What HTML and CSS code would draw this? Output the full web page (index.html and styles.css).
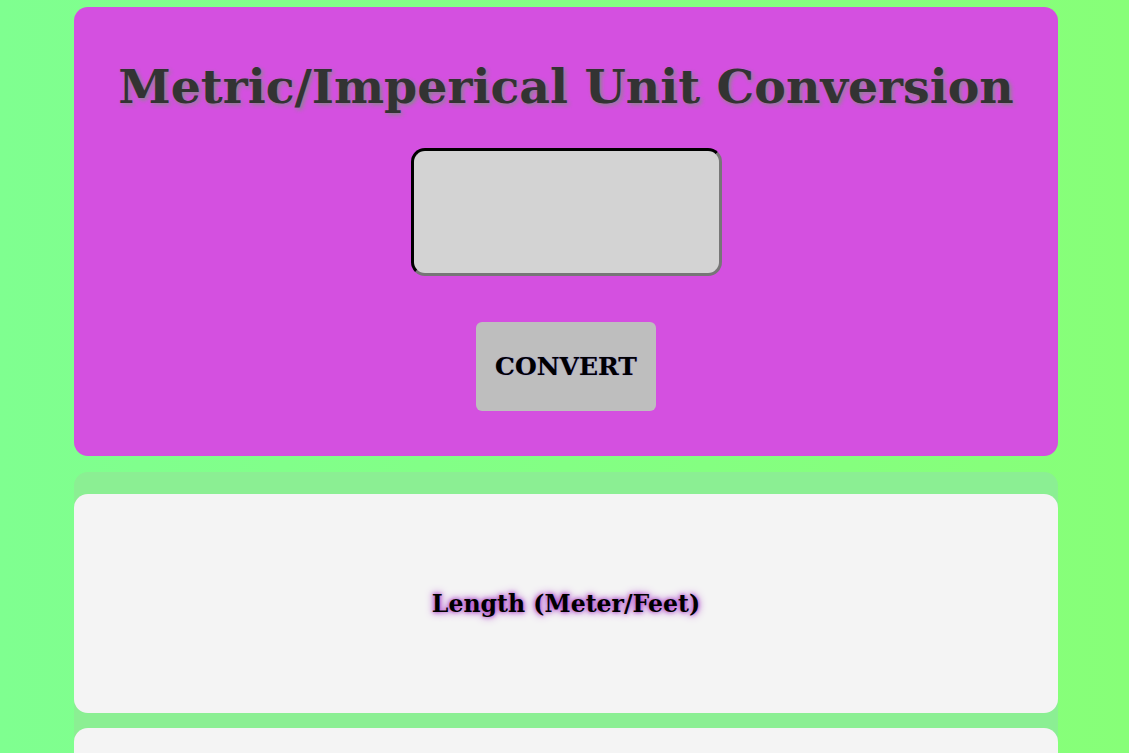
FILE: index.html
```html
<!DOCTYPE html>
<html lang="en">
<head>
<meta charset="utf-8">
<title>Metric/Imperical Unit Conversion</title>
<link rel="stylesheet" href="styles.css">
</head>
<body>
<main class="page">
  <section class="hero">
    <h1 class="title">Metric/Imperical Unit Conversion</h1>
    <input class="value-input" type="text" aria-label="Value">
    <button class="convert-btn" type="button">CONVERT</button>
  </section>
  <section class="results">
    <div class="result-card"><h3 class="result-title">Length (Meter/Feet)</h3></div>
    <div class="result-card"></div>
  </section>
</main>
</body>
</html>
```
FILE: styles.css
```css
html, body {
  margin: 0;
  height: 100%;
}
body {
  background: linear-gradient(90deg, #7fff90 0%, #87ff78 100%);
  font-family: Georgia, "DejaVu Serif", "Liberation Serif", serif;
  overflow: hidden;
}
.page {
  width: 984px;
  margin: 0 0 0 74px;
  padding-top: 7px;
  display: flex;
  flex-direction: column;
  gap: 16px;
}
.hero {
  background: #d450e0;
  border-radius: 14px;
  height: 449px;
  box-sizing: border-box;
  display: flex;
  flex-direction: column;
  align-items: center;
  padding-top: 49px;
}
.title {
  margin: 0;
  font-size: 47.4px;
  font-weight: bold;
  color: #333;
  text-shadow: 2px 2px 4px #888;
  line-height: 60px;
}
.value-input {
  margin-top: 32px;
  width: 311px;
  height: 128px;
  box-sizing: border-box;
  background: #d3d3d3;
  border: 3px inset #767676;
  border-top-color: #2a2a2a;
  border-left-color: #2a2a2a;
  border-radius: 14px;
  font-size: 24px;
}
.convert-btn {
  margin-top: 46px;
  width: 180px;
  height: 89px;
  background: #bebebe;
  border: none;
  border-radius: 6px;
  font-family: inherit;
  font-size: 25px;
  font-weight: bold;
  color: #000;
  text-shadow: 0 0 1px #6a5acd;
}
.results {
  background: #8bef93;
  border-radius: 14px;
  padding-top: 22px;
  display: flex;
  flex-direction: column;
  gap: 15px;
}
.result-card {
  background: #f4f4f4;
  border-radius: 14px;
  height: 219px;
  display: flex;
  align-items: center;
  justify-content: center;
}
.result-title {
  margin: 0;
  font-size: 23.6px;
  font-weight: bold;
  color: #000;
  text-shadow: 0 0 8px #a030c0, 0 0 4px #b040d0;
}
```
